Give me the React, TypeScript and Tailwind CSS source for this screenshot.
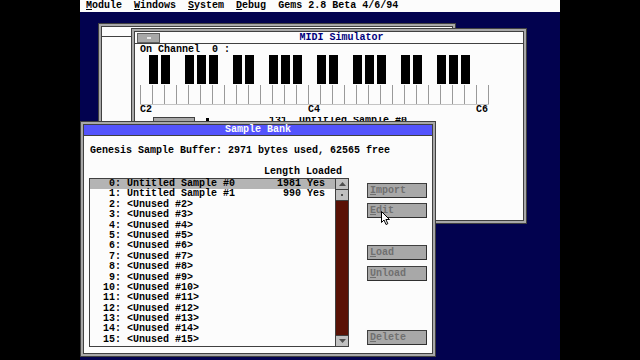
import React from 'react'

const font = "font-['Liberation_Mono',monospace] font-bold text-[10px]"

const menus = ['Module', 'Windows', 'System', 'Debug']

const samples = Array.from({ length: 16 }, (_, i) => {
  if (i === 0) return { name: 'Untitled Sample #0', info: '1981 Yes' }
  if (i === 1) return { name: 'Untitled Sample #1', info: ' 990 Yes' }
  return { name: `<Unused #${i}>`, info: '' }
})

const buttons = [
  { label: 'Import', mt: 'mt-[5px]' },
  { label: 'Edit', mt: 'mt-[5px]' },
  { label: 'Load', mt: 'mt-[27px]' },
  { label: 'Unload', mt: 'mt-[6px]' },
  { label: 'Delete', mt: 'mt-[49px]' },
]

function Underlined({ text }: { text: string }) {
  return (
    <span>
      <span className="underline underline-offset-[1px]">{text[0]}</span>
      {text.slice(1)}
    </span>
  )
}

function Piano() {
  const blacks: number[] = []
  for (let o = 0; o < 4; o++) {
    for (const b of [1, 2, 4, 5, 6]) blacks.push((o * 7 + b) * 12 - 3)
  }
  return (
    <svg width="349" height="50" viewBox="0 0 349 50" className="block">
      {Array.from({ length: 30 }, (_, k) => (
        <line key={k} x1={12 * k + 0.5} y1="30" x2={12 * k + 0.5} y2="50" stroke="#9a9a9a" strokeWidth="1" />
      ))}
      <line x1="0" y1="49.5" x2="349" y2="49.5" stroke="#c4c4c4" strokeWidth="1" />
      {blacks.map((x) => (
        <rect key={x} x={x} y="0" width="9" height="29" fill="#000" />
      ))}
    </svg>
  )
}

function Arrow({ up }: { up?: boolean }) {
  return (
    <svg width="7" height="4" viewBox="0 0 7 4">
      <path d={up ? 'M0 4 L3.5 0 L7 4 Z' : 'M0 0 L3.5 4 L7 0 Z'} fill="#505050" />
    </svg>
  )
}

export default function App() {
  return (
    <div className={`w-[640px] h-[360px] bg-black flex justify-center ${font}`}>
      <div className="relative w-[480px] h-[360px] bg-[#02024f] overflow-hidden">
        {/* menu bar */}
        <div className="h-[12px] bg-[#fcfcfc] flex items-center gap-3 px-[6px] text-black leading-[10px]">
          {menus.map((m) => (
            <Underlined key={m} text={m} />
          ))}
          <span className="whitespace-pre">Gems 2.8 Beta 4/6/94</span>
        </div>

        {/* window in the back */}
        <div className="absolute left-[18px] top-[23px] w-[358px] h-[110px] bg-[#a8a8a8] border border-[#404040] p-[2px]">
          <div className="h-full bg-[#fcfcfc] border border-[#404040]">
            <div className="h-[10px] border-b border-[#404040]" />
          </div>
        </div>

        {/* MIDI Simulator */}
        <div className="absolute left-[51px] top-[28px] w-[396px] h-[196px] bg-[#a8a8a8] border border-[#404040] p-[2px]">
          <div className="h-full flex flex-col bg-[#fcfcfc] border border-[#404040] overflow-hidden">
            <div className="h-[12px] flex items-center border-b border-[#404040] shrink-0">
              <div className="ml-[2px] w-[23px] h-[10px] bg-[#a8a8a8] border border-[#606060] flex items-center justify-center">
                <div className="w-[4px] h-[2px] bg-[#e8e8e8]" />
              </div>
              <div className="flex-1 text-center text-[#00007c] leading-[10px]">MIDI Simulator</div>
            </div>
            <div className="pl-[5px] flex flex-col">
              <div className="mt-[1px] leading-[10px] whitespace-pre text-black">On Channel  0 :</div>
              <div>
                <Piano />
              </div>
              <div className="grid grid-cols-[repeat(29,12px)] leading-[10px] text-black">
                <span className="col-start-1">C2</span>
                <span className="col-start-15">C4</span>
                <span className="col-start-29">C6</span>
              </div>
              <div className="flex items-start mt-[2px] h-[4px] overflow-hidden text-black">
                <div className="ml-[13px] w-[42px] h-[8px] bg-[#a8a8a8] border border-[#404040]" />
                <div className="ml-[11px] mt-[1px] w-[3px] h-[3px] bg-black" />
                <span className="ml-[60px] whitespace-pre leading-[8px]">131  Untitled Sample #0</span>
              </div>
            </div>
          </div>
        </div>

        {/* Sample Bank */}
        <div className="absolute left-0 top-[121px] w-[356px] h-[236px] bg-[#a8a8a8] border border-[#404040] p-[2px]">
          <div className="h-full flex flex-col bg-[#fcfcfc] border border-[#404040]">
            <div className="h-[11px] shrink-0 bg-[#5454fc] border-b border-[#404040] text-[#fcfcfc] text-center leading-[10px]">
              Sample Bank
            </div>
            <div className="pl-[6px] flex flex-col text-black">
              <div className="mt-[10px] leading-[10px] whitespace-pre">
                Genesis Sample Buffer: 2971 bytes used, 62565 free
              </div>
              <div className="mt-[11px] leading-[10px] pl-[174px]">Length Loaded</div>
              <div className="mt-[1px] -ml-[1px] flex">
                <div className="w-[260px] h-[169px] border border-[#404040] flex">
                  <div className="flex-1 flex flex-col">
                    {samples.map((s, i) => (
                      <div
                        key={i}
                        className={`h-[10.4px] leading-[10.4px] flex pr-[10px] whitespace-pre ${
                          i === 0 ? 'bg-[#b4b4b4]' : ''
                        }`}
                      >
                        <span className="w-[31px] text-right">{i}:</span>
                        <span className="ml-[6px] flex-1">{s.name}</span>
                        <span>{s.info}</span>
                      </div>
                    ))}
                  </div>
                  <div className="w-[13px] border-l border-[#404040] bg-[#5a1206] flex flex-col justify-between">
                    <div>
                      <div className="h-[11px] bg-[#c0c0c0] border-b border-[#404040] flex items-center justify-center">
                        <Arrow up />
                      </div>
                      <div className="h-[11px] bg-[#c0c0c0] border-b border-[#404040] flex items-center justify-center">
                        <div className="w-[2px] h-[2px] bg-[#505050]" />
                      </div>
                    </div>
                    <div className="h-[11px] bg-[#c0c0c0] border-t border-[#404040] flex items-center justify-center">
                      <Arrow />
                    </div>
                  </div>
                </div>
                <div className="ml-[18px] flex flex-col">
                  {buttons.map((b) => (
                    <div
                      key={b.label}
                      className={`${b.mt} w-[60px] h-[15px] bg-[#a8a8a8] border border-[#404040] border-r-[#303030] border-b-[#303030] pl-[2px] flex items-center text-[#707070] leading-[10px]`}
                    >
                      <Underlined text={b.label} />
                    </div>
                  ))}
                </div>
              </div>
            </div>
          </div>
        </div>

        {/* mouse cursor */}
        <svg className="absolute left-[301px] top-[211px]" width="10" height="15" viewBox="0 0 10 15">
          <path d="M0.5 0.5 L0.5 11.5 L3 9 L5 13.5 L6.8 12.7 L4.9 8.5 L8.5 8.5 Z" fill="#fcfcfc" stroke="#000" strokeWidth="1" />
        </svg>
      </div>
    </div>
  )
}
